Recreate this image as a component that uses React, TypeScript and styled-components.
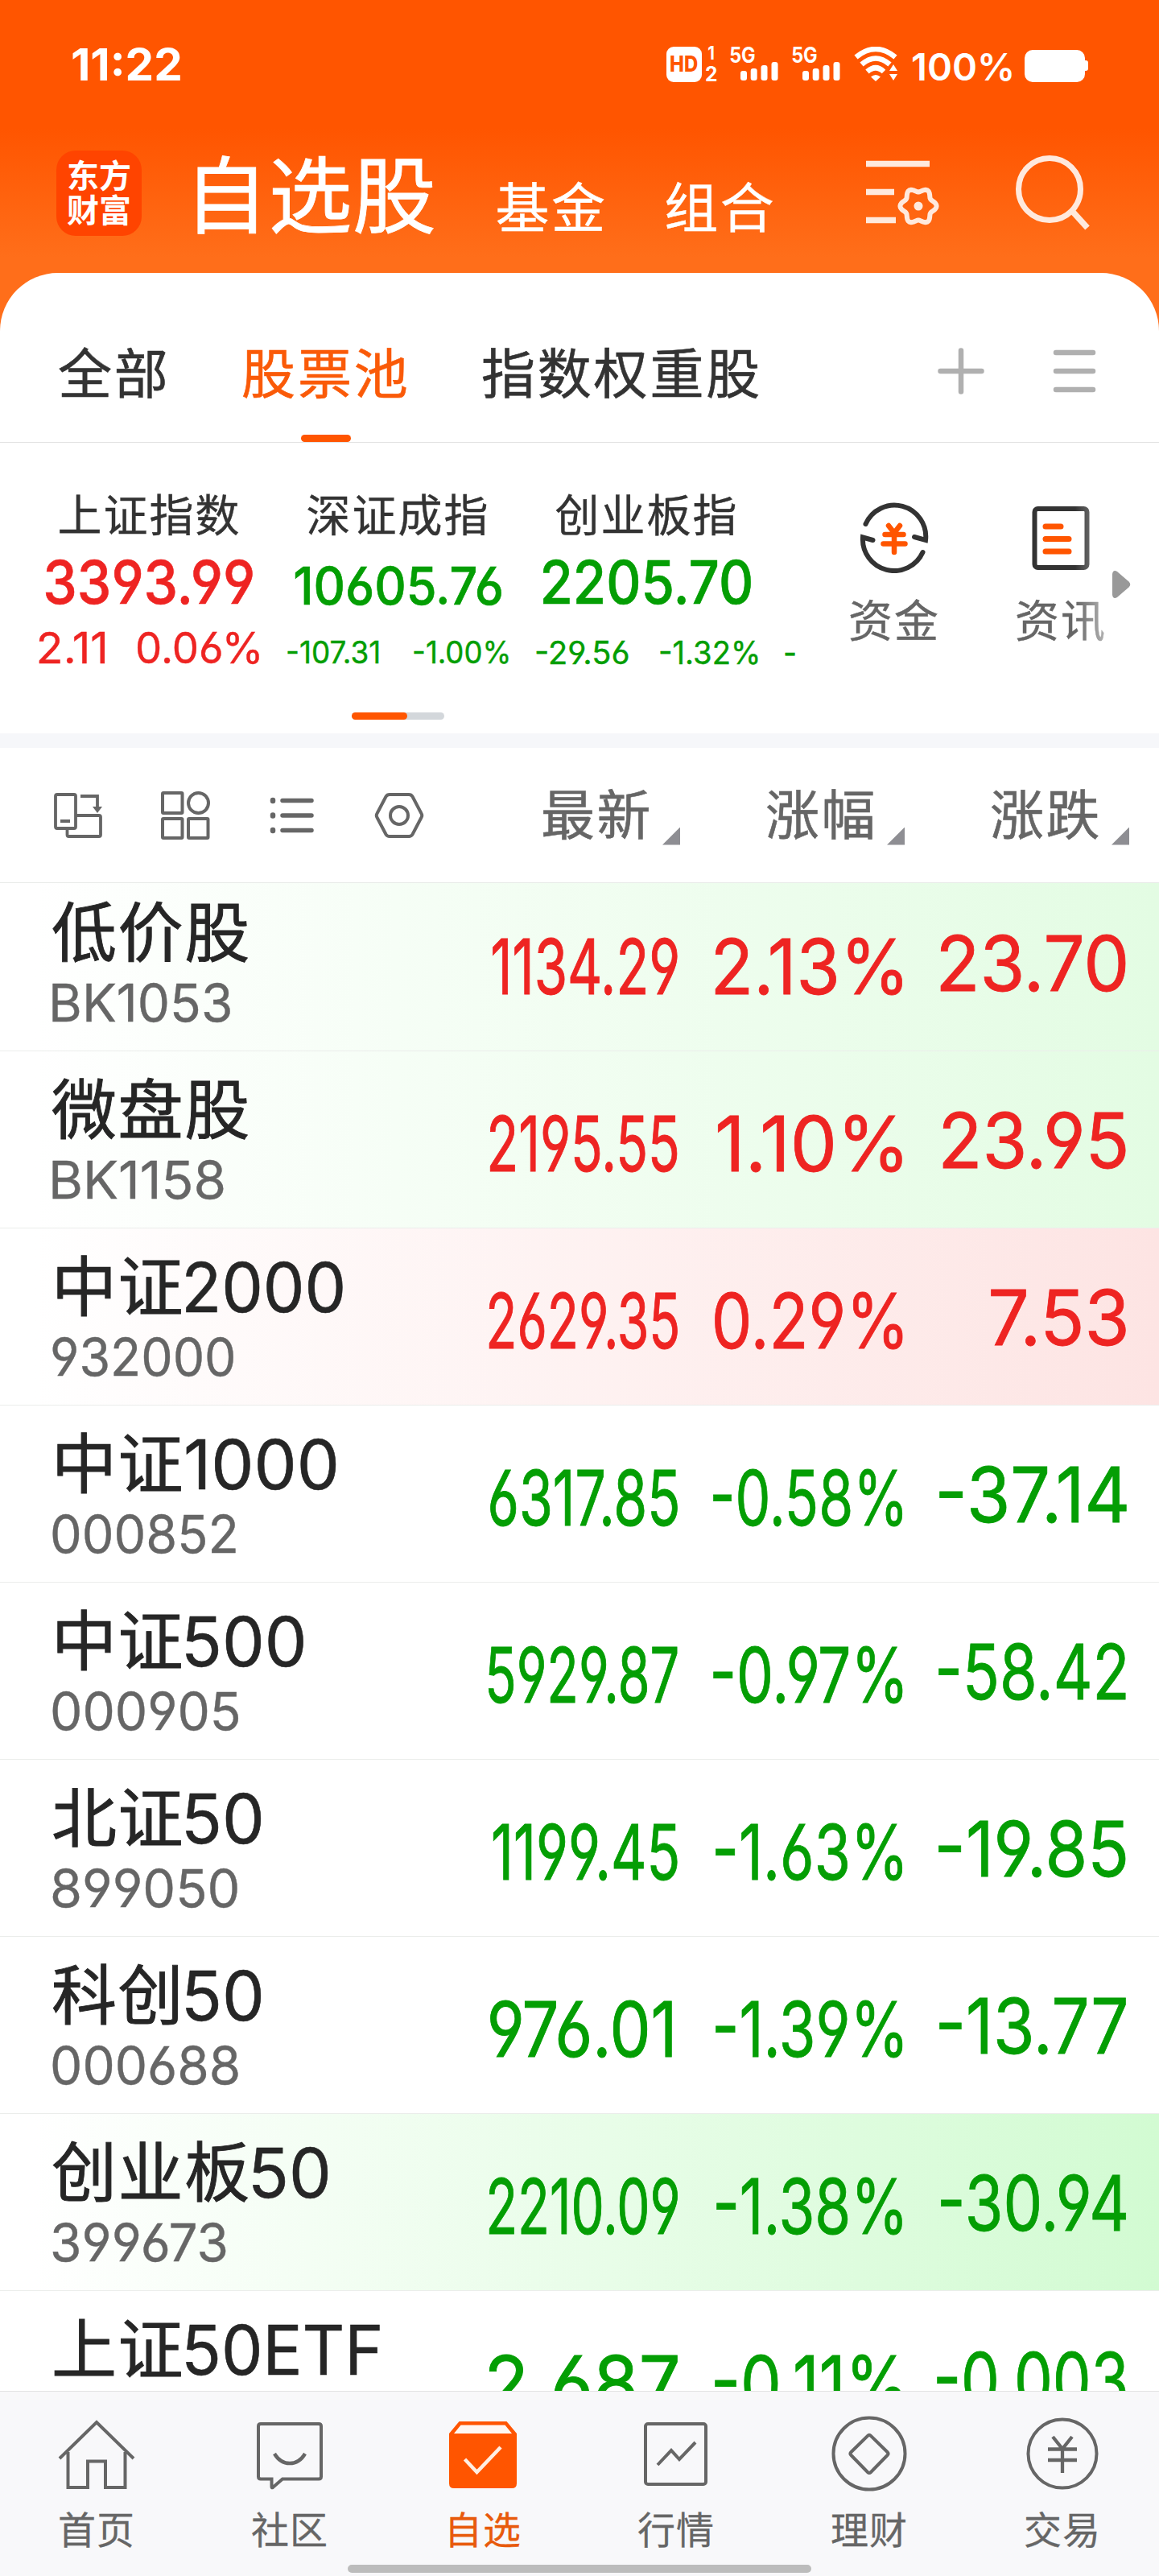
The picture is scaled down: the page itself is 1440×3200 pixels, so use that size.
import React, { useLayoutEffect, useRef, useState } from "react";
import styled, { createGlobalStyle, css } from "styled-components";

const FONT = `Inter, "Noto Sans CJK SC", "Noto Sans", sans-serif`;
const CAP = 0.727;
const ORANGE = "#ff5500";
const RED = "#ee2422";
const GREEN = "#049e04";
const GRAY = "#666666";

const GlobalStyle = createGlobalStyle`
  * { box-sizing: border-box; }
  body { margin: 0; background: #ffffff; font-family: ${FONT}; }
`;

/* ---------- text that is squeezed or stretched to a given width ---------- */

const FitBox = styled.span<{ $width: number; $size: number; $weight: number; $color: string; $stroke: number }>`
  display: inline-block;
  flex: none;
  width: ${(p) => p.$width}px;
  height: ${(p) => p.$size * CAP}px;
  line-height: ${(p) => p.$size * CAP}px;
  font-size: ${(p) => p.$size}px;
  font-weight: ${(p) => p.$weight};
  color: ${(p) => p.$color};
  -webkit-text-stroke: ${(p) => p.$stroke}px currentColor;
  font-feature-settings: "cv03", "cv04";
  white-space: nowrap;
`;

const FitInk = styled.span`
  display: inline-block;
  transform-origin: left center;
`;

interface FitProps {
  text: string;
  width: number;
  size: number;
  color?: string;
  weight?: number;
  stroke?: number;
}

function Fit({ text, width, size, color = "inherit", weight = 400, stroke = 0 }: FitProps) {
  const ref = useRef<HTMLSpanElement>(null);
  const [transform, setTransform] = useState("none");
  useLayoutEffect(() => {
    const ctx = document.createElement("canvas").getContext("2d");
    const el = ref.current;
    if (!ctx || !el) return;
    ctx.font = `${weight} ${size}px Inter`;
    const m = ctx.measureText(text);
    // The alternate digits have other advances than the default ones.
    const shift = el.offsetWidth - m.width;
    const ink = m.actualBoundingBoxRight + m.actualBoundingBoxLeft + shift;
    const scale = width / ink;
    setTransform(`translateX(${m.actualBoundingBoxLeft * scale}px) scaleX(${scale})`);
  }, [text, width, size, weight]);
  return (
    <FitBox $width={width} $size={size} $weight={weight} $color={color} $stroke={stroke}>
      <FitInk ref={ref} style={{ transform }}>
        {text}
      </FitInk>
    </FitBox>
  );
}

/* ---------- page frame ---------- */

const Page = styled.div`
  width: 1440px;
  height: 3200px;
  display: flex;
  flex-direction: column;
  overflow: hidden;
  background: linear-gradient(180deg, #ff5500 0, #ff5500 160px, #ff6e1a 320px, #ff6e1a 440px, #fff 440px);
`;

const StatusBar = styled.div`
  flex: none;
  height: 159px;
  padding: 0 88px 0 90px;
  display: flex;
  align-items: center;
  color: #fff;
`;

const StatusRight = styled.div`
  margin-left: auto;
  display: flex;
  align-items: center;
`;

const HdBadge = styled.div`
  width: 44px;
  height: 44px;
  border-radius: 9px;
  background: #fff;
  display: flex;
  align-items: center;
  justify-content: center;
  margin-right: 4px;
`;

const SimNumbers = styled.div`
  width: 15px;
  height: 43px;
  display: flex;
  flex-direction: column;
  align-items: center;
  justify-content: space-between;
  margin-right: 16px;
`;

const Signal = styled.div`
  width: 60px;
  height: 41px;
  display: flex;
  flex-direction: column;
  margin-right: 17px;
  & > svg {
    margin: -2px 0 0 13px;
  }
`;

const Percent = styled.div`
  display: flex;
  margin: 8px 16px 0 17px;
`;

const Battery = styled.div`
  margin-top: 4px;
  display: flex;
  align-items: center;
`;
const BatteryBody = styled.div`
  width: 75px;
  height: 40px;
  border-radius: 10px;
  background: #fff;
`;
const BatteryTip = styled.div`
  width: 4px;
  height: 13px;
  border-radius: 0 3px 3px 0;
  background: #fff;
`;

const TitleBar = styled.div`
  flex: none;
  height: 180px;
  padding: 0 85px 18px 70px;
  display: flex;
  align-items: center;
  color: #fff;
`;

const Logo = styled.div`
  width: 106px;
  height: 106px;
  border-radius: 24px;
  background: #ff4400;
  display: flex;
  flex-direction: column;
  align-items: center;
  justify-content: center;
  font-size: 40px;
  line-height: 43px;
  font-weight: 700;
`;

const PageTitle = styled.div`
  margin: 7px 0 0 53px;
  font-size: 104px;
  line-height: 120px;
  letter-spacing: 0.5px;
  -webkit-text-stroke: 0.8px currentColor;
`;

const PageLink = styled.div<{ $gap: number }>`
  margin: 38px 0 0 ${(p) => p.$gap}px;
  font-size: 67px;
  line-height: 80px;
  letter-spacing: 2.4px;
  -webkit-text-stroke: 0.4px currentColor;
`;

const TitleIcons = styled.div`
  margin-left: auto;
  display: flex;
  align-items: center;
  gap: 93px;
`;

const Panel = styled.div`
  flex: none;
  height: 2631px;
  border-radius: 72px 72px 0 0;
  background: #fff;
  display: flex;
  flex-direction: column;
  overflow: hidden;
`;

/* ---------- group tabs ---------- */

const TabBar = styled.div`
  flex: none;
  height: 211px;
  border-bottom: 1px solid #e2e2e2;
  padding: 0 78px 0 72px;
  display: flex;
  gap: 88.5px;
`;

const Tab = styled.div<{ $active?: boolean }>`
  padding-top: 76px;
  display: flex;
  flex-direction: column;
  align-items: center;
  justify-content: space-between;
  font-size: 67px;
  line-height: 100px;
  letter-spacing: 2.8px;
  -webkit-text-stroke: 0.6px currentColor;
  color: ${(p) => (p.$active ? "#fa5a08" : "#333")};
  ${(p) =>
    p.$active &&
    css`
      &::after {
        content: "";
        width: 62px;
        height: 9px;
        border-radius: 5px;
        background: ${ORANGE};
      }
    `}
`;

const TabActions = styled.div`
  margin-left: auto;
  padding-top: 92px;
  display: flex;
  align-items: flex-start;
  gap: 84px;
`;

/* ---------- index strip ---------- */

const Strip = styled.div`
  flex: none;
  height: 361px;
  padding-left: 32px;
  display: grid;
  grid-template-columns: 958px 1fr;
  grid-template-rows: 335px 9px;
`;

const Ticker = styled.div`
  display: flex;
  overflow: hidden;
`;

const IndexCard = styled.div<{ $color: string }>`
  flex: none;
  width: 309px;
  padding: 59px 18px 0 16px;
  color: ${(p) => p.$color};
  display: flex;
  flex-direction: column;
`;

const IndexName = styled.div`
  height: 62px;
  text-align: center;
  font-size: 55px;
  line-height: 62px;
  letter-spacing: 2px;
  -webkit-text-stroke: 0.4px currentColor;
  color: #333;
`;

const IndexPrice = styled.div`
  height: 80px;
  display: flex;
  justify-content: center;
  align-items: flex-end;
`;

const IndexDelta = styled.div`
  height: 74px;
  display: flex;
  justify-content: space-between;
  align-items: flex-end;
`;

const Shortcuts = styled.div`
  padding: 74px 0 0 66px;
  display: flex;
  align-items: flex-start;
`;

const Shortcut = styled.div<{ $faded?: boolean }>`
  flex: none;
  width: 110px;
  margin-right: 97px;
  display: flex;
  flex-direction: column;
  align-items: center;
  gap: 24px;
  font-size: 55px;
  line-height: 70px;
  letter-spacing: 2px;
  -webkit-text-stroke: 0.4px currentColor;
  white-space: nowrap;
  color: ${GRAY};
  ${(p) =>
    p.$faded &&
    css`
      margin-right: 8px;
      mask-image: linear-gradient(90deg, #000 66%, rgba(0, 0, 0, 0.5) 100%);
    `}
`;

const MoreArrow = styled.div`
  padding-top: 84px;
`;

const Pager = styled.div`
  grid-column: 1 / -1;
  margin-left: 405px;
  width: 115px;
  height: 9px;
  border-radius: 5px;
  background: #d3d7db;
`;
const PagerThumb = styled.div`
  width: 69px;
  height: 9px;
  border-radius: 5px;
  background: ${ORANGE};
`;

const Band = styled.div`
  flex: none;
  height: 18px;
  background: #f6f7fa;
`;

/* ---------- table ---------- */

const TableHead = styled.div`
  flex: none;
  height: 168px;
  border-bottom: 1px solid #e8ebe8;
  padding: 0 37px 0 65px;
  display: flex;
  align-items: center;
`;

const ViewIcons = styled.div`
  display: flex;
  gap: 69px;
`;

const Columns = styled.div`
  margin-left: auto;
  display: flex;
  gap: 106px;
`;

const ColumnHead = styled.div`
  width: 173px;
  display: flex;
  align-items: flex-end;
  justify-content: space-between;
  font-size: 67px;
  line-height: 80px;
  letter-spacing: 2.6px;
  -webkit-text-stroke: 0.6px currentColor;
  color: ${GRAY};
`;

const SortMark = styled.i`
  width: 22px;
  height: 22px;
  margin-bottom: 3px;
  background: #8e8e93;
  clip-path: polygon(100% 0, 100% 100%, 0 100%);
`;

const List = styled.div`
  flex: 1;
  min-height: 0;
  overflow: hidden;
`;

const Rows = styled.div`
  margin-top: -11px;
`;

const Row = styled.div<{ $tint?: string }>`
  height: 220px;
  padding: 0 41px 0 64px;
  border-bottom: 1px solid #ebedeb;
  background: ${(p) => (p.$tint ? `linear-gradient(90deg, #fff 0, #fff 3%, ${p.$tint} 100%)` : "#fff")};
  background-clip: padding-box;
  display: grid;
  grid-template-columns: 1fr 235px 238px 233px;
  column-gap: 43px;
`;

const NameCell = styled.div`
  display: flex;
  flex-direction: column;
`;

const StockName = styled.div`
  height: 105px;
  display: flex;
  align-items: flex-end;
  gap: 2px;
  color: #262626;
`;

const StockHan = styled.span`
  height: 60px;
  margin-bottom: 2px;
  line-height: 60px;
  font-size: 81px;
  letter-spacing: 1.6px;
  -webkit-text-stroke: 0.9px currentColor;
  white-space: nowrap;
`;

const StockCode = styled.div`
  height: 78px;
  padding-left: 1px;
  display: flex;
  align-items: flex-end;
`;

const ValueCell = styled.div<{ $base: number; $inset?: number }>`
  height: ${(p) => p.$base}px;
  padding-right: ${(p) => p.$inset ?? 0}px;
  display: flex;
  align-items: flex-end;
  justify-content: flex-end;
`;

/* ---------- bottom navigation ---------- */

const NavBar = styled.div`
  flex: none;
  height: 230px;
  border-top: 1px solid #e2e2e3;
  background: #f8f8fa;
  display: flex;
  flex-direction: column;
  align-items: center;
`;

const NavItems = styled.div`
  width: 100%;
  height: 215px;
  display: grid;
  grid-template-columns: repeat(6, 1fr);
`;

const NavItem = styled.div<{ $active?: boolean }>`
  padding-top: 27px;
  display: flex;
  flex-direction: column;
  align-items: center;
  gap: 12px;
  font-size: 47px;
  line-height: 58px;
  letter-spacing: 1px;
  -webkit-text-stroke: 0.3px currentColor;
  color: ${(p) => (p.$active ? "#e85a0c" : GRAY)};
`;

const HomeBar = styled.div`
  width: 576px;
  height: 10px;
  border-radius: 5px;
  background: #bcbcbc;
`;

/* ---------- icons ---------- */

const SignalBars = () => (
  <svg width="47" height="23" fill="#fff">
    <rect x="0" y="11" width="8" height="12" rx="3" />
    <rect x="12.7" y="8" width="8" height="15" rx="3" />
    <rect x="25.5" y="4" width="8" height="19" rx="3" />
    <rect x="38.5" y="0" width="8" height="23" rx="3" />
  </svg>
);

const WifiIcon = () => (
  <svg width="56" height="44" viewBox="0 0 56 44" fill="none" stroke="#fff" strokeWidth="6.5">
    <path d="M2.5 13 Q27 -7 51.500 13" />
    <path d="M9.500 22 Q27 7 44.500 22" />
    <path d="M16.500 31 Q27 21.500 37 31" />
    <path d="M21 37.500 Q27 32.500 33 37.500 L27 43Z" fill="#fff" stroke="none" />
    <path d="M44 30 L49 22 L54 30Z M44 34 H54 L49 42Z" fill="#fff" stroke="none" />
  </svg>
);

const FilterGearIcon = () => {
  const points: string[] = [];
  for (let i = 0; i <= 72; i++) {
    const a = (i / 72) * Math.PI * 2;
    const r = 20 + 2.6 * Math.cos(6 * a);
    points.push(`${(67 + r * Math.cos(a)).toFixed(1)},${(61 + r * Math.sin(a)).toFixed(1)}`);
  }
  return (
    <svg width="94" height="90" viewBox="0 0 94 90" fill="none" stroke="#ffe9dd">
      <path d="M2 8.500H81M2 43.500H37M2 78.500H39" strokeWidth="7.500" />
      <polygon points={points.join(" ")} strokeWidth="6" strokeLinejoin="round" />
      <circle cx="67" cy="61" r="5.500" fill="#ffe9dd" stroke="none" />
    </svg>
  );
};

const SearchIcon = () => (
  <svg width="94" height="94" viewBox="0 0 94 94" fill="none" stroke="#ffe9dd" strokeWidth="7">
    <circle cx="43" cy="42" r="38.500" />
    <path d="M70 68L90 90" strokeWidth="7.500" />
  </svg>
);

const PlusIcon = () => (
  <svg width="60" height="60" stroke="#b0b0b0" strokeWidth="6.500" strokeLinecap="round">
    <path d="M30 4.500V55.500M4.500 30H55.500" />
  </svg>
);

const MenuIcon = () => (
  <svg width="54" height="60" stroke="#b0b0b0" strokeWidth="6.500" strokeLinecap="round">
    <path d="M4 7H50M4 30H50M4 53H50" />
  </svg>
);

const FundIcon = () => (
  <svg width="90" height="88" viewBox="0 0 90 88" fill="none" stroke="#333" strokeWidth="6" strokeLinecap="round" strokeLinejoin="miter">
    <path d="M9.500 27 A39 39 0 0 1 84 47 L70 43" />
    <path d="M80.500 62 A39 39 0 0 1 6 43.500 L18.500 47" />
    <g stroke={ORANGE} strokeWidth="6.500">
      <path d="M38 29L45 38L52 29M45 38V62M33.500 40H56.500M31.500 51.500H58.500" />
    </g>
  </svg>
);

const NewsIcon = () => (
  <svg width="90" height="88" viewBox="0 0 90 88" fill="none" stroke="#333" strokeWidth="6">
    <rect x="12.500" y="8" width="65" height="73" rx="4" />
    <path d="M26 30H45M26 45.500H55M26 61H55" stroke={ORANGE} strokeWidth="7" strokeLinecap="round" />
  </svg>
);

const ArrowIcon = () => (
  <svg width="24" height="36" fill="#999">
    <path d="M1 5 Q2 -1 7 2 L21.500 14.500 Q25 18 21.500 21.500 L7 34 Q2 37 1 31Z" />
  </svg>
);

const RotateIcon = () => (
  <svg width="64" height="64" viewBox="0 0 64 64" fill="none" stroke={GRAY} strokeWidth="3.800">
    <rect x="4" y="6" width="25" height="42" rx="2" />
    <path d="M10 39H22M18.500 48V56Q18.500 58 20.500 58H58Q60 58 60 56V34Q60 32 58 32H29M35 8H56V25" />
    <path d="M50 21H62L56 29Z" fill={GRAY} stroke="none" />
  </svg>
);

const GridIcon = () => (
  <svg width="64" height="64" viewBox="0 0 64 64" fill="none" stroke={GRAY} strokeWidth="4">
    <rect x="4" y="4" width="24.500" height="25" rx="1" />
    <circle cx="48.500" cy="16.500" r="12.500" />
    <rect x="4" y="36" width="24.500" height="24" rx="1" />
    <rect x="36" y="36" width="24.500" height="24" rx="1" />
  </svg>
);

const ListIcon = () => (
  <svg width="64" height="64" viewBox="0 0 64 64" stroke={GRAY} strokeWidth="5.500" strokeLinecap="round">
    <path d="M20 13.500H56M20 32H56M20 50.500H56" />
    <path d="M8 13V14M8 31.500V32.500M8 50V51" strokeWidth="6.500" />
  </svg>
);

const HexIcon = () => (
  <svg width="64" height="64" viewBox="0 0 64 64" fill="none" stroke={GRAY} strokeWidth="4">
    <path d="M20 6H44Q47 6 48.500 8.500L59.500 29.500Q61 32 59.500 34.500L48.500 55.500Q47 58 44 58H20Q17 58 15.500 55.500L4.500 34.500Q3 32 4.500 29.500L15.500 8.500Q17 6 20 6Z" />
    <circle cx="32" cy="32" r="11" />
  </svg>
);

const navSvg = { width: 100, height: 104, viewBox: "0 0 100 104", fill: "none", stroke: GRAY, strokeWidth: 4 };

const HomeIcon = () => (
  <svg {...navSvg}>
    <path d="M4 56L50 11L96 56M14.500 48V92H39V59.500H61V92H85.500V48" />
  </svg>
);
const ChatIcon = () => (
  <svg {...navSvg}>
    <path d="M14 13H86Q89 13 89 16V78.500Q89 81.500 86 81.500H41L29 92Q27.500 93 27.500 91V81.500H14Q11 81.500 11 78.500V16Q11 13 14 13Z" />
    <path d="M31 50Q38 62 50 62Q62 62 69 50" strokeWidth="4.500" />
  </svg>
);
const PickIcon = () => (
  <svg {...navSvg} stroke="none">
    <path d="M20.500 10H79.500L92 25V87Q92 93 86 93H14Q8 93 8 87V25Z" fill={ORANGE} />
    <path d="M22.500 14.500H77.500L86 25H14Z" fill="#fff8f2" />
    <path d="M27.500 57L42.500 73L72 42" stroke="#ffeee2" strokeWidth="4.500" fill="none" />
  </svg>
);
const MarketIcon = () => (
  <svg {...navSvg}>
    <rect x="12" y="13" width="75" height="75" rx="3" />
    <path d="M27 64L44 46L54 57L74 36" />
  </svg>
);
const WealthIcon = () => (
  <svg {...navSvg}>
    <circle cx="50" cy="50" r="44.500" />
    <path d="M48 28Q50 25.500 52 28L72.500 48Q74.500 50 72.500 52L52 73Q50 75 48 73L27.500 52Q25.500 50 27.500 48Z" />
  </svg>
);
const TradeIcon = () => (
  <svg {...navSvg}>
    <circle cx="50" cy="50" r="42.500" />
    <path d="M38 29L50 44L62 29M50 44V74M32 44.500H68M32 58H68" strokeWidth="4.300" />
  </svg>
);

/* ---------- data ---------- */

interface IndexInfo {
  name: string;
  color: string;
  price: [string, number, number];
  delta: [string, number, number];
  pct: [string, number, number];
}

const indices: IndexInfo[] = [
  { name: "上证指数", color: RED, price: ["3393.99", 257, 74], delta: ["2.11", 82, 53], pct: ["0.06%", 152, 53] },
  { name: "深证成指", color: GREEN, price: ["10605.76", 256, 65], delta: ["-107.31", 114, 38], pct: ["-1.00%", 118, 38] },
  { name: "创业板指", color: GREEN, price: ["2205.70", 258, 74], delta: ["-29.56", 114, 39], pct: ["-1.32%", 121, 39] },
];

interface Stock {
  han: string;
  latin?: [string, number];
  code?: [string, number];
  last: [string, number];
  pct: [string, number];
  change: [string, number];
  up?: boolean;
  tint?: string;
}

const stocks: Stock[] = [
  { han: "低价股", code: ["BK1053", 221], last: ["1134.29", 230], pct: ["2.13%", 232], change: ["23.70", 230], up: true, tint: "#e3fce3" },
  { han: "微盘股", code: ["BK1158", 213], last: ["2195.55", 233], pct: ["1.10%", 229], change: ["23.95", 227], up: true, tint: "#e3fce3" },
  { han: "中证", latin: ["2000", 195], code: ["932000", 226], last: ["2629.35", 234], pct: ["0.29%", 233], change: ["7.53", 168], up: true, tint: "#fde4e3" },
  { han: "中证", latin: ["1000", 186], code: ["000852", 227], last: ["6317.85", 233], pct: ["-0.58%", 235], change: ["-37.14", 232] },
  { han: "中证", latin: ["500", 146], code: ["000905", 231], last: ["5929.87", 235], pct: ["-0.97%", 235], change: ["-58.42", 233] },
  { han: "北证", latin: ["50", 93], code: ["899050", 230], last: ["1199.45", 229], pct: ["-1.63%", 232], change: ["-19.85", 233] },
  { han: "科创", latin: ["50", 93], code: ["000688", 231], last: ["976.01", 226], pct: ["-1.39%", 232], change: ["-13.77", 232] },
  { han: "创业板", latin: ["50", 93], code: ["399673", 216], last: ["2210.09", 234], pct: ["-1.38%", 231], change: ["-30.94", 230], tint: "#d2fbd2" },
  { han: "上证", latin: ["50ETF", 240], last: ["2.687", 234], pct: ["-0.11%", 233], change: ["-0.003", 235] },
];

const nav = [
  { label: "首页", Icon: HomeIcon },
  { label: "社区", Icon: ChatIcon },
  { label: "自选", Icon: PickIcon, active: true },
  { label: "行情", Icon: MarketIcon },
  { label: "理财", Icon: WealthIcon },
  { label: "交易", Icon: TradeIcon },
];

export default function App() {
  return (
    <>
      <GlobalStyle />
      <Page>
        <StatusBar>
          <Fit text="11:22" width={134} size={55} weight={700} />
          <StatusRight>
            <HdBadge>
              <Fit text="HD" width={34} size={27} weight={800} color={ORANGE} />
            </HdBadge>
            <SimNumbers>
              <Fit text="1" width={7} size={23} weight={700} />
              <Fit text="2" width={14} size={25} weight={700} />
            </SimNumbers>
            <Signal>
              <Fit text="5G" width={31} size={27} weight={700} />
              <SignalBars />
            </Signal>
            <Signal>
              <Fit text="5G" width={31} size={27} weight={700} />
              <SignalBars />
            </Signal>
            <WifiIcon />
            <Percent>
              <Fit text="100%" width={123} size={47} weight={600} />
            </Percent>
            <Battery>
              <BatteryBody />
              <BatteryTip />
            </Battery>
          </StatusRight>
        </StatusBar>

        <TitleBar>
          <Logo>
            <span>东方</span>
            <span>财富</span>
          </Logo>
          <PageTitle>自选股</PageTitle>
          <PageLink $gap={73}>基金</PageLink>
          <PageLink $gap={71}>组合</PageLink>
          <TitleIcons>
            <FilterGearIcon />
            <SearchIcon />
          </TitleIcons>
        </TitleBar>

        <Panel>
          <TabBar>
            <Tab>全部</Tab>
            <Tab $active>股票池</Tab>
            <Tab>指数权重股</Tab>
            <TabActions>
              <PlusIcon />
              <MenuIcon />
            </TabActions>
          </TabBar>

          <Strip>
            <Ticker>
              {indices.map((it) => (
                <IndexCard key={it.name} $color={it.color}>
                  <IndexName>{it.name}</IndexName>
                  <IndexPrice>
                    <Fit text={it.price[0]} width={it.price[1]} size={it.price[2]} weight={500} stroke={0.6} />
                  </IndexPrice>
                  <IndexDelta>
                    <Fit text={it.delta[0]} width={it.delta[1]} size={it.delta[2]} stroke={0.4} />
                    <Fit text={it.pct[0]} width={it.pct[1]} size={it.pct[2]} stroke={0.4} />
                  </IndexDelta>
                </IndexCard>
              ))}
              <IndexCard $color={GREEN}>
                <IndexName />
                <IndexPrice />
                <IndexDelta>
                  <Fit text="-" width={13} size={39} stroke={0.6} />
                </IndexDelta>
              </IndexCard>
            </Ticker>
            <Shortcuts>
              <Shortcut>
                <FundIcon />
                资金
              </Shortcut>
              <Shortcut $faded>
                <NewsIcon />
                资讯
              </Shortcut>
              <MoreArrow>
                <ArrowIcon />
              </MoreArrow>
            </Shortcuts>
            <Pager>
              <PagerThumb />
            </Pager>
          </Strip>

          <Band />

          <TableHead>
            <ViewIcons>
              <RotateIcon />
              <GridIcon />
              <ListIcon />
              <HexIcon />
            </ViewIcons>
            <Columns>
              {["最新", "涨幅", "涨跌"].map((label) => (
                <ColumnHead key={label}>
                  {label}
                  <SortMark />
                </ColumnHead>
              ))}
            </Columns>
          </TableHead>

          <List>
            <Rows>
              {stocks.map((s, i) => {
                const color = s.up ? RED : GREEN;
                return (
                  <Row key={i} $tint={s.tint}>
                    <NameCell>
                      <StockName>
                        <StockHan>{s.han}</StockHan>
                        {s.latin && <Fit text={s.latin[0]} width={s.latin[1]} size={85} stroke={0.6} />}
                      </StockName>
                      {s.code && (
                        <StockCode>
                          <Fit text={s.code[0]} width={s.code[1]} size={65} color={GRAY} stroke={0.4} />
                        </StockCode>
                      )}
                    </NameCell>
                    <ValueCell $base={149} $inset={s.last[0] === "976.01" ? 7 : 0}>
                      <Fit text={s.last[0]} width={s.last[1]} size={95} color={color} stroke={1} />
                    </ValueCell>
                    <ValueCell $base={149} $inset={2}>
                      <Fit text={s.pct[0]} width={s.pct[1]} size={95} color={color} stroke={0.8} />
                    </ValueCell>
                    <ValueCell $base={145}>
                      <Fit text={s.change[0]} width={s.change[1]} size={95} color={color} stroke={0.8} />
                    </ValueCell>
                  </Row>
                );
              })}
            </Rows>
          </List>
        </Panel>

        <NavBar>
          <NavItems>
            {nav.map(({ label, Icon, active }) => (
              <NavItem key={label} $active={active}>
                <Icon />
                {label}
              </NavItem>
            ))}
          </NavItems>
          <HomeBar />
        </NavBar>
      </Page>
    </>
  );
}
